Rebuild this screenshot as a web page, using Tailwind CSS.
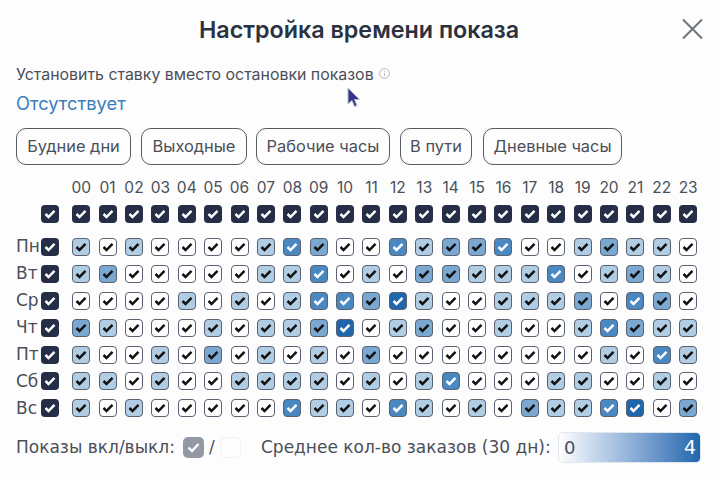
<!DOCTYPE html>
<html lang="ru">
<head>
    <meta charset="UTF-8">
    <title>Настройка времени показа</title>
    <script src="https://cdn.jsdelivr.net/npm/@tailwindcss/browser@4"></script>
</head>
<body class="w-[718px] h-[480px] overflow-hidden bg-[#fdfdfe] font-['Inter',sans-serif] text-[#4b4f58]">
    <div class="relative h-[480px] pl-4">
        <!-- title row -->
        <div class="h-[60px] pt-[13px] pr-4 flex justify-center">
            <h1 class="text-[23.300px] leading-[34px] font-semibold text-[#2a3140]">Настройка времени показа</h1>
        </div>
        <svg class="absolute left-[681px] top-[18px] w-[23px] h-[22px]" viewBox="0 0 23 22" fill="none" stroke="#6f747c" stroke-width="2">
            <path d="M2 1.500L21 20.500M21 1.500L2 20.500"/>
        </svg>

        <div class="flex items-center h-[22px] mt-[4px] text-[15.900px] leading-[22px]">
            <span>Установить ставку вместо остановки показов</span>
            <svg class="ml-[5px] mb-[3px] w-[11px] h-[11px]" viewBox="0 0 11 11" fill="none" stroke="#a3a8ae" stroke-width="0.800">
                <circle cx="5.500" cy="5.500" r="4.900"/>
                <path d="M5.500 4.800V8.300M5.500 2.800V3.700"/>
            </svg>
        </div>
        <div class="h-[24px] mt-[5px] text-[18.300px] leading-[24px] text-[#3b7dbd]">Отсутствует</div>

        <!-- presets -->
        <div class="flex mt-[13px] text-[16.400px]">
            <button class="w-[115px] h-[37px] border-[1.5px] border-[#565b64] rounded-[10px]">Будние дни</button>
            <button class="w-[106px] h-[37px] ml-[10px] border-[1.5px] border-[#565b64] rounded-[10px]">Выходные</button>
            <button class="w-[134px] h-[37px] ml-[9px] border-[1.5px] border-[#565b64] rounded-[10px]">Рабочие часы</button>
            <button class="w-[72px] h-[37px] ml-[10px] border-[1.5px] border-[#565b64] rounded-[10px]">В пути</button>
            <button class="w-[139px] h-[37px] ml-[11px] border-[1.5px] border-[#565b64] rounded-[10px]">Дневные часы</button>
        </div>

        <!-- schedule grid, filled by the script below -->
        <div id="hours" class="grid grid-cols-[52px_repeat(24,26.400px)] mt-[11px] h-[24px] text-[15.500px] leading-[24px] text-center"></div>
        <div id="all" class="grid grid-cols-[52px_repeat(24,26.400px)] h-[27px] mt-[0.500px] items-center justify-items-center"></div>
        <div id="days" class="grid grid-cols-[52px_repeat(24,26.400px)] auto-rows-[26.900px] mt-[6px] items-center justify-items-center"></div>

        <!-- legend -->
        <div class="flex items-center h-[32px] mt-[10px] font-['DejaVu_Sans',sans-serif] text-[17px]">
            <span class="w-[167px] whitespace-nowrap">Показы вкл/выкл:</span>
            <span class="flex items-center justify-center w-[21px] h-[21px] rounded-[5px] bg-[#9299a4]">
                <svg class="w-[13px] h-[11px]" viewBox="0 0 13 11" fill="none" stroke="#fff" stroke-width="2.400"><path d="M1.500 5.500L5 9L11.500 2"/></svg>
            </span>
            <span class="ml-[5px] w-[6px]">/</span>
            <span class="w-[21px] h-[21px] ml-[5px] rounded-[5px] border border-[#f0f1f3]"></span>
            <span class="ml-[20px] w-[297px] whitespace-nowrap">Среднее кол-во заказов (30 дн):</span>
            <div class="flex justify-between items-center w-[143px] h-[31px] pl-[5px] pr-[4px] rounded-[5px] border border-[#dfe6ec] bg-gradient-to-r from-white to-[#1f66ad] text-[18px]">
                <span>0</span><span class="text-white text-[19px] font-medium">4</span>
            </div>
        </div>

        <!-- mouse pointer from the recording -->
        <svg class="absolute left-[346px] top-[87px] w-[15px] h-[22px]" viewBox="0 0 15 22">
            <path d="M2 1V17L6 13.500L8.500 19.500L11 18.500L8.500 12.500H13.500Z" fill="#33358f" stroke="#b9bcc4" stroke-width="1"/>
        </svg>
    </div>
    <script>
        const hours = [...Array(24).keys()].map(h => String(h).padStart(2, '0'))
        // average orders per day and hour, 0-4
        const grid = [
            ['Пн', '101000013200312230012110'],
            ['Вт', '120000011301022111301210'],
            ['Ср', '000010101332410011120320'],
            ['Чт', '210001011240120010013211'],
            ['Пт', '100102010102000000001031'],
            ['Сб', '110100111101013000110010'],
            ['Вс', '101000003110310102113402'],
        ]
        const boxLevel = {
            0: 'bg-white',
            1: 'bg-[#b0cde4]',
            2: 'bg-[#7aa8d0]',
            3: 'bg-[#4a88c2]',
            4: 'bg-[#1f66ad]',
        }
        const box = (cls, color) => `<span class="flex items-center justify-center w-[18px] h-[18px] rounded-[4px] ${cls}"><svg class="w-[12px] h-[10px]" viewBox="0 0 12 10" fill="none" stroke="${color}" stroke-width="2.500"><path d="M1.500 5L4.500 8L10.500 1.800"/></svg></span>`
        const dark = 'bg-[#262e47]'

        document.getElementById('hours').innerHTML = '<span></span>' + hours.map(h => `<span>${h}</span>`).join('')
        document.getElementById('all').innerHTML =
            `<span class="justify-self-end mr-[9px]">${box(dark, '#fff')}</span>` + hours.map(() => box(dark, '#fff')).join('')
        document.getElementById('days').innerHTML = grid.map(([day, row]) => {
            const cells = row.split('').map(l => box(`${boxLevel[l]} border-[1.500px] border-[#5a6170]`, l >= 3 ? '#fff' : '#111'))
            return `<span class="flex justify-self-start items-center justify-between w-[43px] font-['DejaVu_Sans',sans-serif] text-[17px]">${day}${box(dark, '#fff')}</span>` + cells.join('')
        }).join('')
    </script>
</body>
</html>
